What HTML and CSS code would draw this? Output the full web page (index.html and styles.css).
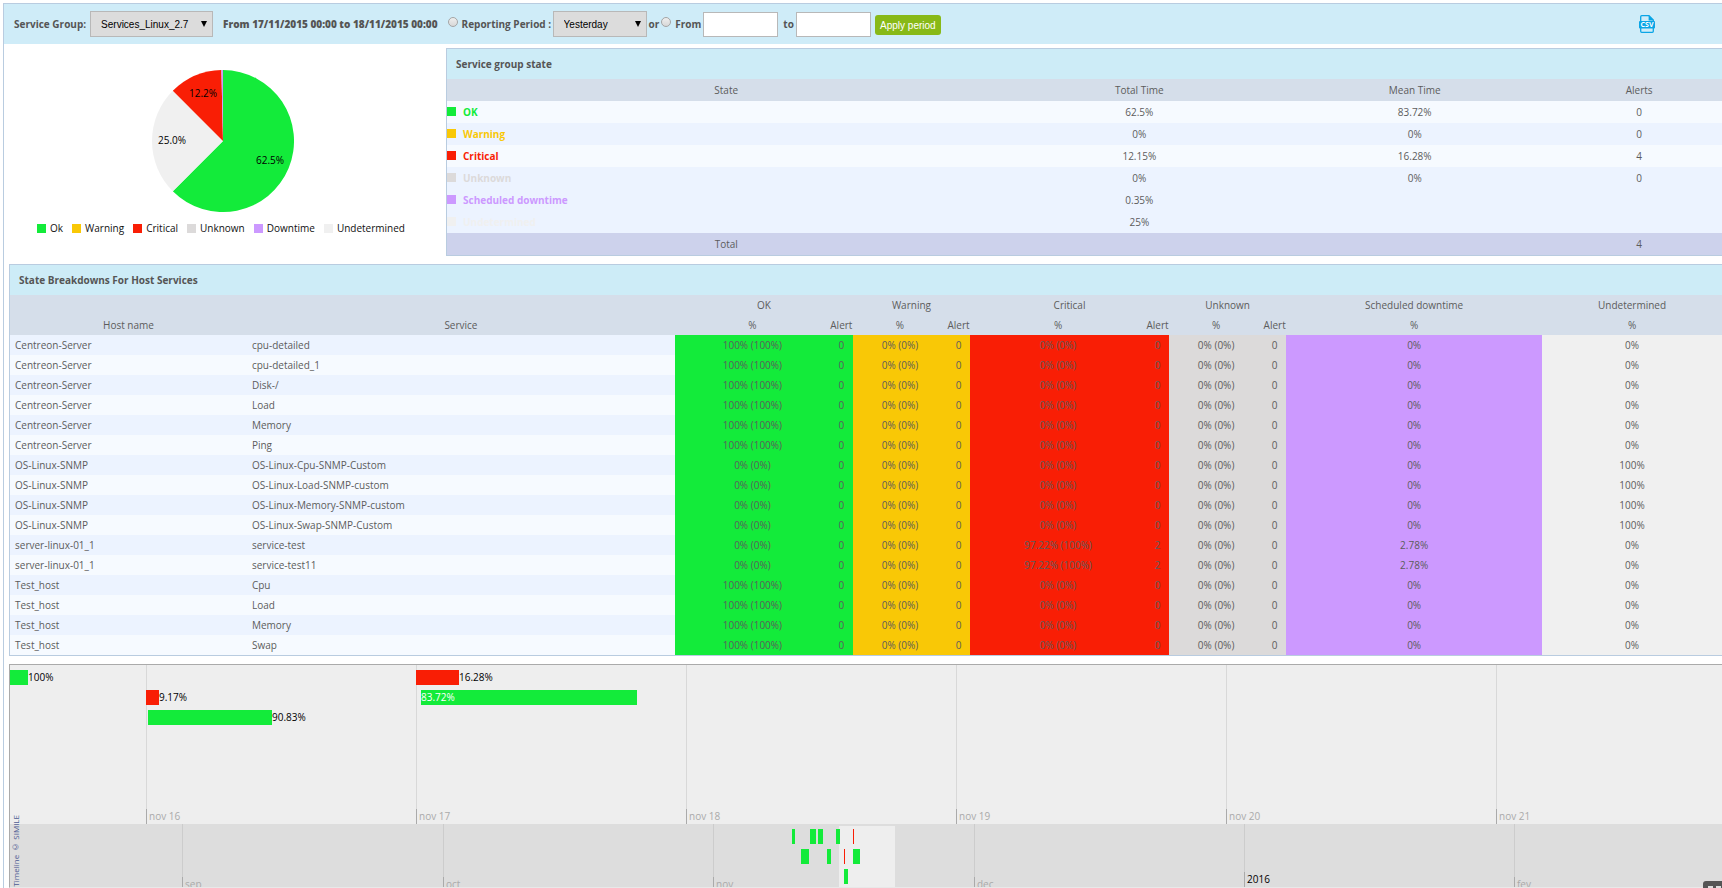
FILE: index.html
```
<!DOCTYPE html>
<html lang="en">
<head>
<meta charset="utf-8">
<title>Service group reporting</title>
<link rel="stylesheet" href="styles.css">
</head>
<body>
<main class="page">
  <form class="toolbar">
    <label class="toolbar-label" for="group">Service Group:</label>
    <span class="select select-group"><select id="group"><option>Services_Linux_2.7</option></select></span>
    <strong class="range">From 17/11/2015 00:00 to 18/11/2015 00:00</strong>
    <input class="radio" type="radio" name="mode" id="mode-period">
    <label for="mode-period" class="period-label">Reporting Period :</label>
    <span class="select select-period"><select aria-label="Reporting period"><option>Yesterday</option></select></span>
    <span class="or">or</span>
    <input class="radio" type="radio" name="mode" id="mode-custom">
    <label for="mode-custom" class="from-label">From</label>
    <input class="date" type="text" aria-label="From date">
    <label for="date-to" class="to-label">to</label>
    <input class="date" type="text" id="date-to">
    <button class="apply" type="button">Apply period</button>
    <a class="csv" href="#" aria-label="Export as CSV">
      <svg width="16" height="18" viewBox="0 0 16 18">
        <path d="M1.7 7V1.7Q1.7.7 2.7.7H10L14.3 5V7M1.7 12V16.3Q1.7 17.3 2.7 17.3H13.3Q14.3 17.3 14.3 16.3V12" fill="none" stroke="#0aa5e6" stroke-width="1.3"/>
        <path d="M9.6.2L15 5.6H9.6Z" fill="#0aa5e6"/>
        <rect y="6" width="16" height="7.6" rx="1" fill="#0aa5e6"/>
        <text x="8" y="12.4" text-anchor="middle" class="csv-text">CSV</text>
      </svg>
    </a>
  </form>

  <div class="summary">
    <section class="chart">
      <svg class="pie" width="142" height="142" viewBox="0 0 142 142" role="img" aria-label="State distribution">
        <path d="M71 71V0A71 71 0 1 1 20.8 121.2Z" fill="#13eb3a"/>
        <path d="M71 71L20.8 121.2A71 71 0 0 1 20.8 20.8Z" fill="#f0f0f0"/>
        <path d="M71 71L20.8 20.8A71 71 0 0 1 69.4 0Z" fill="#f91e05"/>
        <path d="M71 71L69.4 0H71Z" fill="#cc99ff"/>
        <text x="51" y="27">12.2%</text>
        <text x="20" y="74">25.0%</text>
        <text x="118" y="94">62.5%</text>
      </svg>
      <ul class="legend">
        <li><i class="swatch ok"></i>Ok</li>
        <li><i class="swatch warning"></i>Warning</li>
        <li><i class="swatch critical"></i>Critical</li>
        <li><i class="swatch unknown"></i>Unknown</li>
        <li><i class="swatch downtime"></i>Downtime</li>
        <li><i class="swatch undetermined"></i>Undetermined</li>
      </ul>
    </section>

    <section class="panel state-panel">
      <h2>Service group state</h2>
      <table class="state-table">
        <colgroup><col class="c-state"><col class="c-total"><col class="c-mean"><col></colgroup>
        <thead><tr><th>State</th><th>Total Time</th><th>Mean Time</th><th>Alerts</th></tr></thead>
        <tbody>
          <tr><th class="t-ok"><i class="swatch ok"></i>OK</th><td>62.5%</td><td>83.72%</td><td>0</td></tr>
          <tr class="alt"><th class="t-warning"><i class="swatch warning"></i>Warning</th><td>0%</td><td>0%</td><td>0</td></tr>
          <tr><th class="t-critical"><i class="swatch critical"></i>Critical</th><td>12.15%</td><td>16.28%</td><td>4</td></tr>
          <tr class="alt"><th class="t-unknown"><i class="swatch unknown"></i>Unknown</th><td>0%</td><td>0%</td><td>0</td></tr>
          <tr class="alt"><th class="t-downtime"><i class="swatch downtime"></i>Scheduled downtime</th><td>0.35%</td><td></td><td></td></tr>
          <tr class="alt"><th class="t-undetermined"><i class="swatch undetermined"></i>Undetermined</th><td>25%</td><td></td><td></td></tr>
        </tbody>
        <tfoot><tr><td>Total</td><td></td><td></td><td>4</td></tr></tfoot>
      </table>
    </section>
  </div>

  <section class="panel hosts-panel">
    <h2>State Breakdowns For Host Services</h2>
    <table class="hosts-table">
      <colgroup>
        <col class="c-host"><col class="c-service"><col class="c-ok"><col class="c-alert"><col class="c-small"><col class="c-alert">
        <col class="c-critical"><col class="c-alert"><col class="c-small"><col class="c-alert"><col class="c-down"><col>
      </colgroup>
      <thead>
        <tr><th></th><th></th><th colspan="2">OK</th><th colspan="2">Warning</th><th colspan="2">Critical</th><th colspan="2">Unknown</th><th>Scheduled downtime</th><th>Undetermined</th></tr>
        <tr><th>Host name</th><th>Service</th><th>%</th><th>Alert</th><th>%</th><th>Alert</th><th>%</th><th>Alert</th><th>%</th><th>Alert</th><th>%</th><th>%</th></tr>
      </thead>
      <tbody>
        <tr><td>Centreon-Server</td><td>cpu-detailed</td><td class="ok">100% (100%)</td><td class="ok">0</td><td class="warning">0% (0%)</td><td class="warning">0</td><td class="critical">0% (0%)</td><td class="critical">0</td><td class="unknown">0% (0%)</td><td class="unknown">0</td><td class="downtime">0%</td><td class="undetermined">0%</td></tr>
        <tr><td>Centreon-Server</td><td>cpu-detailed_1</td><td class="ok">100% (100%)</td><td class="ok">0</td><td class="warning">0% (0%)</td><td class="warning">0</td><td class="critical">0% (0%)</td><td class="critical">0</td><td class="unknown">0% (0%)</td><td class="unknown">0</td><td class="downtime">0%</td><td class="undetermined">0%</td></tr>
        <tr><td>Centreon-Server</td><td>Disk-/</td><td class="ok">100% (100%)</td><td class="ok">0</td><td class="warning">0% (0%)</td><td class="warning">0</td><td class="critical">0% (0%)</td><td class="critical">0</td><td class="unknown">0% (0%)</td><td class="unknown">0</td><td class="downtime">0%</td><td class="undetermined">0%</td></tr>
        <tr><td>Centreon-Server</td><td>Load</td><td class="ok">100% (100%)</td><td class="ok">0</td><td class="warning">0% (0%)</td><td class="warning">0</td><td class="critical">0% (0%)</td><td class="critical">0</td><td class="unknown">0% (0%)</td><td class="unknown">0</td><td class="downtime">0%</td><td class="undetermined">0%</td></tr>
        <tr><td>Centreon-Server</td><td>Memory</td><td class="ok">100% (100%)</td><td class="ok">0</td><td class="warning">0% (0%)</td><td class="warning">0</td><td class="critical">0% (0%)</td><td class="critical">0</td><td class="unknown">0% (0%)</td><td class="unknown">0</td><td class="downtime">0%</td><td class="undetermined">0%</td></tr>
        <tr><td>Centreon-Server</td><td>Ping</td><td class="ok">100% (100%)</td><td class="ok">0</td><td class="warning">0% (0%)</td><td class="warning">0</td><td class="critical">0% (0%)</td><td class="critical">0</td><td class="unknown">0% (0%)</td><td class="unknown">0</td><td class="downtime">0%</td><td class="undetermined">0%</td></tr>
        <tr><td>OS-Linux-SNMP</td><td>OS-Linux-Cpu-SNMP-Custom</td><td class="ok">0% (0%)</td><td class="ok">0</td><td class="warning">0% (0%)</td><td class="warning">0</td><td class="critical">0% (0%)</td><td class="critical">0</td><td class="unknown">0% (0%)</td><td class="unknown">0</td><td class="downtime">0%</td><td class="undetermined">100%</td></tr>
        <tr><td>OS-Linux-SNMP</td><td>OS-Linux-Load-SNMP-custom</td><td class="ok">0% (0%)</td><td class="ok">0</td><td class="warning">0% (0%)</td><td class="warning">0</td><td class="critical">0% (0%)</td><td class="critical">0</td><td class="unknown">0% (0%)</td><td class="unknown">0</td><td class="downtime">0%</td><td class="undetermined">100%</td></tr>
        <tr><td>OS-Linux-SNMP</td><td>OS-Linux-Memory-SNMP-custom</td><td class="ok">0% (0%)</td><td class="ok">0</td><td class="warning">0% (0%)</td><td class="warning">0</td><td class="critical">0% (0%)</td><td class="critical">0</td><td class="unknown">0% (0%)</td><td class="unknown">0</td><td class="downtime">0%</td><td class="undetermined">100%</td></tr>
        <tr><td>OS-Linux-SNMP</td><td>OS-Linux-Swap-SNMP-Custom</td><td class="ok">0% (0%)</td><td class="ok">0</td><td class="warning">0% (0%)</td><td class="warning">0</td><td class="critical">0% (0%)</td><td class="critical">0</td><td class="unknown">0% (0%)</td><td class="unknown">0</td><td class="downtime">0%</td><td class="undetermined">100%</td></tr>
        <tr><td>server-linux-01_1</td><td>service-test</td><td class="ok">0% (0%)</td><td class="ok">0</td><td class="warning">0% (0%)</td><td class="warning">0</td><td class="critical">97.22% (100%)</td><td class="critical">2</td><td class="unknown">0% (0%)</td><td class="unknown">0</td><td class="downtime">2.78%</td><td class="undetermined">0%</td></tr>
        <tr><td>server-linux-01_1</td><td>service-test11</td><td class="ok">0% (0%)</td><td class="ok">0</td><td class="warning">0% (0%)</td><td class="warning">0</td><td class="critical">97.22% (100%)</td><td class="critical">2</td><td class="unknown">0% (0%)</td><td class="unknown">0</td><td class="downtime">2.78%</td><td class="undetermined">0%</td></tr>
        <tr><td>Test_host</td><td>Cpu</td><td class="ok">100% (100%)</td><td class="ok">0</td><td class="warning">0% (0%)</td><td class="warning">0</td><td class="critical">0% (0%)</td><td class="critical">0</td><td class="unknown">0% (0%)</td><td class="unknown">0</td><td class="downtime">0%</td><td class="undetermined">0%</td></tr>
        <tr><td>Test_host</td><td>Load</td><td class="ok">100% (100%)</td><td class="ok">0</td><td class="warning">0% (0%)</td><td class="warning">0</td><td class="critical">0% (0%)</td><td class="critical">0</td><td class="unknown">0% (0%)</td><td class="unknown">0</td><td class="downtime">0%</td><td class="undetermined">0%</td></tr>
        <tr><td>Test_host</td><td>Memory</td><td class="ok">100% (100%)</td><td class="ok">0</td><td class="warning">0% (0%)</td><td class="warning">0</td><td class="critical">0% (0%)</td><td class="critical">0</td><td class="unknown">0% (0%)</td><td class="unknown">0</td><td class="downtime">0%</td><td class="undetermined">0%</td></tr>
        <tr><td>Test_host</td><td>Swap</td><td class="ok">100% (100%)</td><td class="ok">0</td><td class="warning">0% (0%)</td><td class="warning">0</td><td class="critical">0% (0%)</td><td class="critical">0</td><td class="unknown">0% (0%)</td><td class="unknown">0</td><td class="downtime">0%</td><td class="undetermined">0%</td></tr>
      </tbody>
    </table>
  </section>

  <section class="timeline">
    <div class="band days">
      <span class="mark" style="left:136px">nov 16</span>
      <span class="mark" style="left:406px">nov 17</span>
      <span class="mark" style="left:676px">nov 18</span>
      <span class="mark" style="left:946px">nov 19</span>
      <span class="mark" style="left:1216px">nov 20</span>
      <span class="mark" style="left:1486px">nov 21</span>
      <span class="event row1 ok" style="left:0;width:18px"><b>100%</b></span>
      <span class="event row2 critical" style="left:136px;width:13px"><b>9.17%</b></span>
      <span class="event row3 ok" style="left:138px;width:124px"><b>90.83%</b></span>
      <span class="event row1 critical" style="left:406px;width:43px"><b>16.28%</b></span>
      <span class="event row2 ok inside" style="left:411px;width:216px"><b>83.72%</b></span>
    </div>
    <div class="band months">
      <span class="window"></span>
      <span class="mark" style="left:172px">sep</span>
      <span class="mark" style="left:433px">oct</span>
      <span class="mark" style="left:703px">nov</span>
      <span class="mark" style="left:964px">dec</span>
      <span class="mark year" style="left:1234px">2016</span>
      <span class="mark" style="left:1504px">fev</span>
      <span class="event row1 ok" style="left:782px;width:3px"></span>
      <span class="event row1 ok" style="left:800px;width:6px"></span>
      <span class="event row1 ok" style="left:808px;width:5px"></span>
      <span class="event row1 ok" style="left:826px;width:4px"></span>
      <span class="event row1 critical" style="left:843px;width:1px"></span>
      <span class="event row2 ok" style="left:791px;width:8px"></span>
      <span class="event row2 ok" style="left:817px;width:4px"></span>
      <span class="event row2 critical" style="left:834px;width:1px"></span>
      <span class="event row2 ok" style="left:843px;width:7px"></span>
      <span class="event row3 ok" style="left:834px;width:4px"></span>
    </div>
    <a class="credit" href="#">Timeline © SIMILE</a>
  </section>
</main>
<div class="corner"><i></i><i></i></div>
</body>
</html>
```
FILE: styles.css
```
* { box-sizing: border-box; }
body {
  margin: 0;
  background: #fff;
  color: #5c5c5c;
  font: 10px/20px "Open Sans", "Noto Sans", sans-serif;
  overflow: hidden;
}
.page {
  margin: 3px 0 0 3px;
  border-top: 1px solid #b9cce0;
  border-left: 1px solid #b9cce0;
}

.ok { background: #13eb3a; }
.warning { background: #f9c806; }
.critical { background: #f91e05; }
.unknown { background: #dcdada; }
.downtime { background: #cc99ff; }
.undetermined { background: #f0f0f0; }

/* toolbar */
.toolbar {
  display: flex;
  align-items: center;
  height: 40px;
  padding: 0 67px 0 10px;
  background: #cfecf8;
  color: #555;
  font-weight: 700;
  white-space: nowrap;
}
.select { position: relative; height: 26px; }
.select::after {
  content: "";
  position: absolute;
  right: 6px;
  top: 10px;
  border: 3px solid transparent;
  border-top: 6px solid #000;
  border-bottom: 0;
}
.select select {
  width: 100%;
  height: 26px;
  padding: 1px 10px 0;
  border: 1px solid #b8b8b8;
  border-radius: 0;
  background: #dcdcdc;
  color: #000;
  font: 10px "Liberation Sans", Arial, sans-serif;
  appearance: none;
}
.select-group { width: 123px; margin-left: 4px; }
.select-period { width: 94px; }
.range { margin: 0 10px; }
.radio {
  appearance: none;
  width: 10px;
  height: 10px;
  margin: 0 4px 4px 0;
  border: 1px solid #a5a5a5;
  border-radius: 50%;
  background: linear-gradient(#eee, #d8d8d8);
}
.period-label { width: 91px; }
.or { margin: 0 2px; }
.from-label { width: 28px; }
.date {
  width: 75px;
  height: 25px;
  border: 1px solid #b8b8b8;
  background: #fff;
}
.to-label { margin: 0 2px 0 5px; }
.apply {
  width: 66px;
  height: 20px;
  margin: 2px 0 0 4px;
  padding: 0;
  border: 0;
  border-radius: 3px;
  background: #88b917;
  color: #fff;
  font: 10px "Liberation Sans", Arial, sans-serif;
}
.csv { display: flex; margin-left: auto; }
.csv-text { fill: #fff; font: 700 7px "Open Sans", sans-serif; }

/* summary */
.summary {
  display: grid;
  grid-template-columns: 442px 1fr;
  padding-top: 4px;
}
.chart {
  display: flex;
  flex-direction: column;
  align-items: center;
  padding: 22px 4px 0 0;
}
.pie text { fill: #000; text-anchor: middle; }
.legend {
  display: flex;
  gap: 9px;
  margin: 6px 0 0;
  padding: 0 4px 0 0;
  list-style: none;
  color: #111;
}
.legend li { display: flex; align-items: center; gap: 4px; }
.swatch { display: inline-block; width: 9px; height: 9px; }

.panel { border: 1px solid #b9cce0; border-right: 0; }
.panel h2 {
  margin: 0;
  padding: 0 9px;
  background: #cdecf7;
  color: #555;
  font-size: 10px;
  line-height: 30px;
}
table { width: 100%; border-collapse: collapse; table-layout: fixed; }
th, td { padding: 0; font-weight: 400; text-align: center; white-space: nowrap; }
thead { background: #d5deea; }

.state-table tr { height: 22px; }
.state-table tbody tr { background: #f6faff; }
.state-table tbody .alt { background: #ecf3ff; }
.state-table tbody th { text-align: left; font-weight: 700; }
.state-table .swatch { margin-right: 7px; }
.state-table tfoot { background: #cdd2ec; }
.c-state { width: 43.8%; }
.c-total { width: 21%; }
.c-mean { width: 22.2%; }
.state-table .t-ok { color: #13eb3a; background: none; }
.t-warning { color: #f9c806; }
.t-critical { color: #f91e05; }
.t-unknown { color: #dcdada; }
.t-downtime { color: #cc99ff; }
.t-undetermined { color: #f0f0f0; }

/* host breakdown */
.hosts-panel { margin: 8px 0 0 5px; }
.hosts-table tr { height: 20px; }
.hosts-table tbody tr { background: #f6faff; }
.hosts-table tbody tr:nth-child(odd) { background: #ecf3ff; }
.hosts-table tbody td:nth-child(-n+2) { padding-left: 5px; text-align: left; }
.c-host { width: 13.84%; }
.c-service { width: 25%; }
.c-ok { width: 9.05%; }
.c-small { width: 5.5%; }
.c-critical { width: 10.28%; }
.c-down { width: 14.95%; }
.c-alert { width: 23px; }

/* timeline */
.timeline {
  position: relative;
  margin: 8px 0 0 5px;
  border: 1px solid #aaa;
  border-right: 0;
  border-bottom-color: #e8e8e8;
  overflow: hidden;
}
.band { position: relative; overflow: hidden; }
.days { height: 159px; background: #eee; }
.months { height: 63px; background: #ddd; }
.mark {
  position: absolute;
  top: 0;
  height: 159px;
  padding: 141px 0 0 2px;
  border-left: 1px solid #d8d8d8;
  color: #aaa;
  line-height: 20px;
}
.mark::before {
  content: "";
  position: absolute;
  left: -1px;
  bottom: 0;
  height: 15px;
  border-left: 1px solid #aaa;
}
.months .mark { height: 68px; padding-top: 50px; border-color: #ccc; }
.months .year { height: 63px; padding-top: 45px; color: #000; }
.event { position: absolute; height: 15px; line-height: 15px; }
.event b { margin-left: 100%; color: #000; font-weight: 400; }
.event.inside b { margin-left: 0; color: #fff; }
.row1 { top: 5px; }
.row2 { top: 25px; }
.row3 { top: 45px; }
.window {
  position: absolute;
  left: 829px;
  top: 2px;
  width: 56px;
  height: 61px;
  background: #eee;
}
.credit {
  position: absolute;
  left: 0;
  bottom: 0;
  color: #4d5b93;
  font-size: 8px;
  line-height: 12px;
  text-decoration: none;
  white-space: nowrap;
  writing-mode: vertical-rl;
  transform: rotate(180deg);
}
.corner {
  position: fixed;
  right: 0;
  bottom: 0;
  display: flex;
  gap: 3px;
  width: 19px;
  height: 7px;
  padding: 5px 0 0 5px;
  border-radius: 3px 0 0 0;
  background: #555;
}
.corner i { width: 5px; height: 2px; background: #ddd; }
```
